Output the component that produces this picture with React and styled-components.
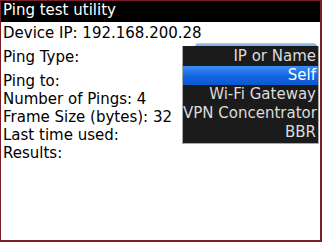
import React from 'react'
import styled, { createGlobalStyle } from 'styled-components'

const GlobalStyle = createGlobalStyle`
  html, body {
    margin: 0;
    padding: 0;
    background: #ffffff;
  }
`

const Screen = styled.div`
  position: relative;
  box-sizing: border-box;
  width: 322px;
  height: 242px;
  border-style: solid;
  border-color: #7b1d2d;
  border-width: 1px 2px 2px 1px;
  background: #ffffff;
  font-family: 'DejaVu Sans', 'Liberation Sans', sans-serif;
  font-size: 15px;
  color: #000000;
  overflow: hidden;
`

const TitleBar = styled.div`
  box-sizing: border-box;
  height: 21px;
  padding: 0 2px;
  background: #000000;
  color: #ffffff;
  line-height: 19px;
`

const Body = styled.div`
  display: flex;
  flex-direction: column;
  padding: 2px 2px 0 2px;
`

const Line = styled.div`
  line-height: 18px;
  height: 18px;
  white-space: nowrap;
`

const FieldRow = styled.div`
  display: flex;
  justify-content: space-between;
  align-items: center;
  height: 30px;
  line-height: 18px;
`

const Combo = styled.div`
  width: 122px;
  height: 28px;
  margin-right: 1px;
  border-radius: 4px 4px 0 0;
  background: linear-gradient(#a8cdf6, #4b8ee6 20%, #2f74da);
`

const Menu = styled.ul`
  position: absolute;
  top: 45px;
  right: 1px;
  box-sizing: border-box;
  width: 137px;
  margin: 0;
  padding: 1px 0;
  list-style: none;
  background: #1b1b1b;
  border: 1px solid #a9a9a9;
  border-top: none;
`

const MenuItem = styled.li`
  height: 19px;
  line-height: 19px;
  padding-right: 2px;
  text-align: right;
  white-space: nowrap;
  color: ${(p) => (p.$selected ? '#ffffff' : '#dcdcdc')};
  background: ${(p) =>
    p.$selected ? 'linear-gradient(#3c8df5, #1366e0 55%, #0b58cf)' : 'transparent'};
`

const pingTypes = ['IP or Name', 'Self', 'Wi-Fi Gateway', 'VPN Concentrator', 'BBR']

const App = () => {
  return (
    <Screen>
      <GlobalStyle />
      <TitleBar>Ping test utility</TitleBar>
      <Body>
        <Line>Device IP: 192.168.200.28</Line>
        <FieldRow>
          <span>Ping Type:</span>
          <Combo />
        </FieldRow>
        <Line>Ping to:</Line>
        <Line>Number of Pings: 4</Line>
        <Line>Frame Size (bytes): 32</Line>
        <Line>Last time used:</Line>
        <Line>Results:</Line>
      </Body>
      <Menu>
        {pingTypes.map((t) => (
          <MenuItem key={t} $selected={t === 'Self'}>
            {t}
          </MenuItem>
        ))}
      </Menu>
    </Screen>
  )
}

export default App
